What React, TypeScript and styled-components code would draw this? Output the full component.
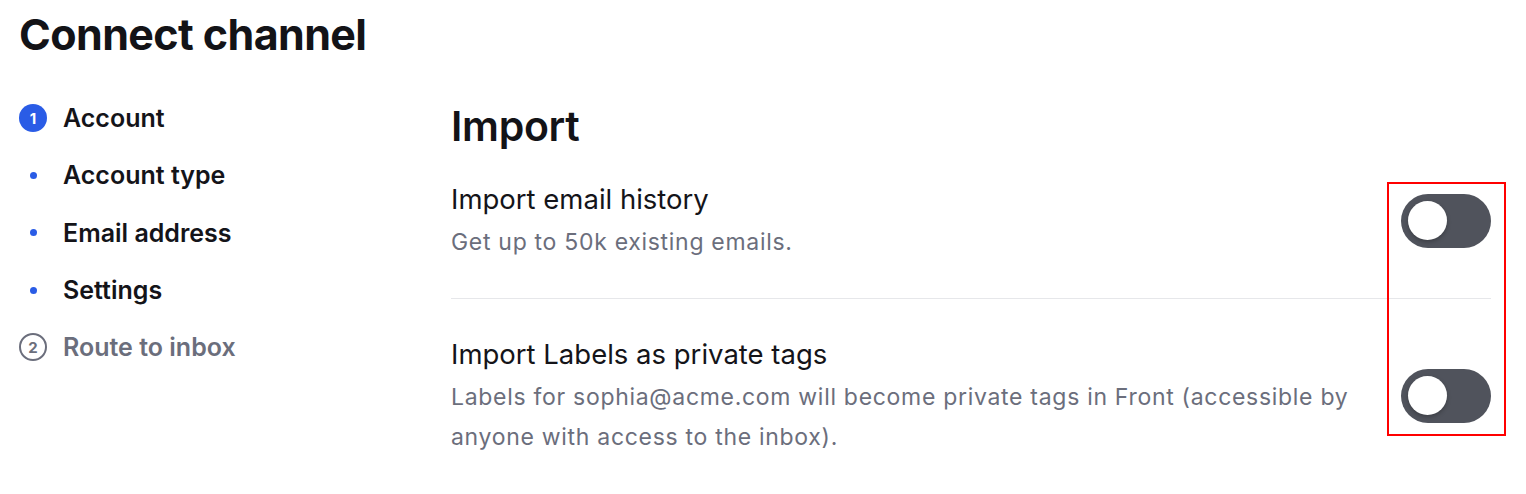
import React from "react";
import styled, { createGlobalStyle } from "styled-components";

const GlobalStyle = createGlobalStyle`
  html, body { margin: 0; padding: 0; background: #ffffff; }
  body { font-family: Inter, "Noto Sans", sans-serif; color: #141419; -webkit-font-smoothing: antialiased; }
  * { box-sizing: border-box; }
`;

const Page = styled.div`
  position: relative;
  width: 1526px;
  height: 494px;
  padding: 4px 35px 0 19px;
  overflow: hidden;
`;

const Title = styled.h1`
  margin: 0;
  font-size: 43px;
  line-height: 60px;
  font-weight: 700;
  letter-spacing: -0.6px;
  color: #131317;
`;

const Body = styled.div`
  display: flex;
  margin-top: 25.5px;
`;

const Steps = styled.ol`
  list-style: none;
  margin: 0;
  padding: 0;
  width: 432px;
  flex: none;
  display: flex;
  flex-direction: column;
`;

const Step = styled.li<{ $muted?: boolean }>`
  display: flex;
  align-items: center;
  gap: 16px;
  height: 57.3px;
  font-size: 25px;
  font-weight: 600;
  color: ${(p) => (p.$muted ? "#6b6e7c" : "#141419")};
`;

const Marker = styled.span`
  width: 28px;
  height: 28px;
  flex: none;
  display: flex;
  align-items: center;
  justify-content: center;
`;

const NumberBadge = styled.span<{ $active?: boolean }>`
  width: 28px;
  height: 28px;
  border-radius: 50%;
  display: flex;
  align-items: center;
  justify-content: center;
  font-size: 15px;
  font-weight: 700;
  ${(p) =>
    p.$active
      ? `background: #2a5ce6; color: #fff;`
      : `border: 2px solid #6b6e7c; color: #6b6e7c;`}
`;

const Dot = styled.span`
  width: 7px;
  height: 7px;
  border-radius: 50%;
  background: #2a5ce6;
`;

const Main = styled.section`
  flex: 1;
  display: flex;
  flex-direction: column;
  margin-top: 11.5px;
`;

const Heading = styled.h2`
  margin: 0 0 28px;
  font-size: 41px;
  line-height: 50px;
  font-weight: 600;
  letter-spacing: -0.3px;
  color: #131317;
`;

const Option = styled.div<{ $divider?: boolean }>`
  display: flex;
  align-items: center;
  justify-content: space-between;
  gap: 40px;
  padding: ${(p) => (p.$divider ? "35px 0 0" : "0 0 36px")};
  border-bottom: ${(p) => (p.$divider ? "none" : "1px solid #e6e7ea")};
`;

const OptionText = styled.div`
  display: flex;
  flex-direction: column;
  gap: 3px;
  max-width: 910px;
`;

const OptionTitle = styled.div`
  font-size: 27.5px;
  line-height: 40px;
  font-weight: 400;
  color: #141419;
`;

const OptionDesc = styled.div`
  font-size: 23px;
  line-height: 40px;
  letter-spacing: 0.7px;
  color: #6b6e7c;
`;

const Toggle = styled.button`
  flex: none;
  width: 90px;
  height: 54px;
  border: none;
  border-radius: 27px;
  background: #50535c;
  padding: 0 0 0 7px;
  display: flex;
  align-items: center;
  cursor: pointer;
`;

const Knob = styled.span`
  width: 39px;
  height: 39px;
  border-radius: 50%;
  background: #ffffff;
  box-shadow: 0 2px 4px rgba(0, 0, 0, 0.25);
`;

const Highlight = styled.div`
  position: absolute;
  left: 1387px;
  top: 182px;
  width: 119px;
  height: 254px;
  border: 2.5px solid #ff0000;
  pointer-events: none;
`;

const steps = [
  { label: "Account", kind: "num", n: 1, active: true },
  { label: "Account type", kind: "dot" },
  { label: "Email address", kind: "dot" },
  { label: "Settings", kind: "dot" },
  { label: "Route to inbox", kind: "num", n: 2, active: false },
];

export default function App() {
  return (
    <>
      <GlobalStyle />
      <Page>
        <Title>Connect channel</Title>
        <Body>
          <Steps>
            {steps.map((s) => (
              <Step key={s.label} $muted={s.kind === "num" && !s.active}>
                <Marker>
                  {s.kind === "num" ? (
                    <NumberBadge $active={s.active}>{s.n}</NumberBadge>
                  ) : (
                    <Dot />
                  )}
                </Marker>
                {s.label}
              </Step>
            ))}
          </Steps>
          <Main>
            <Heading>Import</Heading>
            <Option>
              <OptionText>
                <OptionTitle>Import email history</OptionTitle>
                <OptionDesc>Get up to 50k existing emails.</OptionDesc>
              </OptionText>
              <Toggle aria-label="Import email history">
                <Knob />
              </Toggle>
            </Option>
            <Option $divider>
              <OptionText>
                <OptionTitle>Import Labels as private tags</OptionTitle>
                <OptionDesc>
                  Labels for sophia@acme.com will become private tags in Front (accessible by anyone with access to the inbox).
                </OptionDesc>
              </OptionText>
              <Toggle aria-label="Import Labels as private tags">
                <Knob />
              </Toggle>
            </Option>
          </Main>
        </Body>
        <Highlight />
      </Page>
    </>
  );
}
